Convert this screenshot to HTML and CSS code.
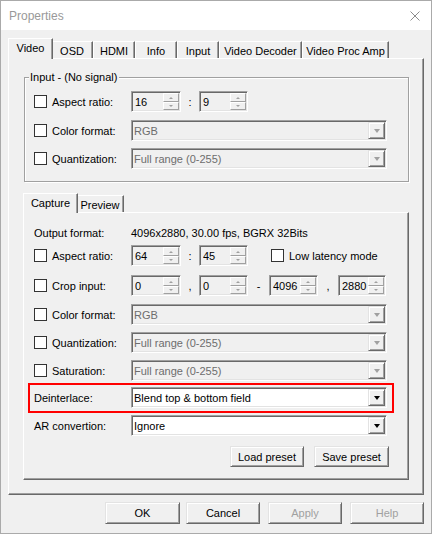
FILE: index.html
```html
<!DOCTYPE html>
<html>
<head>
<meta charset="utf-8">
<title>Properties</title>
<link rel="stylesheet" href="styles.css">
</head>
<body>
<div class="window">
  <div class="titlebar">
    <span class="title">Properties</span>
    <svg class="close" width="10" height="10" viewBox="0 0 10 10"><path d="M0.5 0.5L9.5 9.5M9.5 0.5L0.5 9.5" stroke="#8c8c8c" stroke-width="1" fill="none"/></svg>
  </div>
  <div class="body">
    <div class="tabs outer-tabs">
      <div class="tab sel t-video">Video</div>
      <div class="tab t-osd">OSD</div>
      <div class="tab t-hdmi">HDMI</div>
      <div class="tab t-info">Info</div>
      <div class="tab t-input">Input</div>
      <div class="tab t-dec">Video Decoder</div>
      <div class="tab t-amp">Video Proc Amp</div>
    </div>
    <div class="page outer-page">
      <fieldset class="group">
        <legend>Input - (No signal)</legend>
        <div class="row">
          <span class="lbl"><span class="cb"></span>Aspect ratio:</span>
          <div class="edit w50"><span class="val">16</span><span class="spin"><span class="sb up"></span><span class="sb dn"></span></span></div>
          <span class="sep w18">:</span>
          <div class="edit w49"><span class="val">9</span><span class="spin"><span class="sb up"></span><span class="sb dn"></span></span></div>
        </div>
        <div class="row mt8">
          <span class="lbl"><span class="cb"></span>Color format:</span>
          <div class="combo dis"><span class="val">RGB</span><span class="dd"><span class="arr"></span></span></div>
        </div>
        <div class="row mt7">
          <span class="lbl"><span class="cb"></span>Quantization:</span>
          <div class="combo dis"><span class="val">Full range (0-255)</span><span class="dd"><span class="arr"></span></span></div>
        </div>
      </fieldset>

      <div class="tabs inner-tabs">
        <div class="tab sel t-cap">Capture</div>
        <div class="tab t-prev">Preview</div>
      </div>
      <div class="page inner-page">
        <div class="row">
          <span class="lbl">Output format:</span>
          <span>4096x2880, 30.00 fps, BGRX 32Bits</span>
        </div>
        <div class="row mt2">
          <span class="lbl"><span class="cb"></span>Aspect ratio:</span>
          <div class="edit w50"><span class="val">64</span><span class="spin"><span class="sb up"></span><span class="sb dn"></span></span></div>
          <span class="sep w18">:</span>
          <div class="edit w49"><span class="val">45</span><span class="spin"><span class="sb up"></span><span class="sb dn"></span></span></div>
          <span class="cb cb-low"></span><span>Low latency mode</span>
        </div>
        <div class="row mt9">
          <span class="lbl"><span class="cb"></span>Crop input:</span>
          <div class="edit w50"><span class="val">0</span><span class="spin"><span class="sb up"></span><span class="sb dn"></span></span></div>
          <span class="sep w18">,</span>
          <div class="edit w49"><span class="val">0</span><span class="spin"><span class="sb up"></span><span class="sb dn"></span></span></div>
          <span class="sep w21">-</span>
          <div class="edit w49"><span class="val">4096</span><span class="spin"><span class="sb up"></span><span class="sb dn"></span></span></div>
          <span class="sep w20">,</span>
          <div class="edit w48"><span class="val">2880</span><span class="spin"><span class="sb up"></span><span class="sb dn"></span></span></div>
        </div>
        <div class="row mt8">
          <span class="lbl"><span class="cb"></span>Color format:</span>
          <div class="combo dis"><span class="val">RGB</span><span class="dd"><span class="arr"></span></span></div>
        </div>
        <div class="row mt7">
          <span class="lbl"><span class="cb"></span>Quantization:</span>
          <div class="combo dis"><span class="val">Full range (0-255)</span><span class="dd"><span class="arr"></span></span></div>
        </div>
        <div class="row mt7">
          <span class="lbl"><span class="cb"></span>Saturation:</span>
          <div class="combo dis"><span class="val">Full range (0-255)</span><span class="dd"><span class="arr"></span></span></div>
        </div>
        <div class="highlight">
          <div class="row">
            <span class="lbl">Deinterlace:</span>
            <div class="combo"><span class="val">Blend top &amp; bottom field</span><span class="dd"><span class="arr"></span></span></div>
          </div>
        </div>
        <div class="row mt2">
          <span class="lbl">AR convertion:</span>
          <div class="combo"><span class="val">Ignore</span><span class="dd"><span class="arr"></span></span></div>
        </div>
        <div class="preset-row">
          <button class="btn">Load preset</button>
          <button class="btn btn-save">Save preset</button>
        </div>
      </div>
    </div>
    <div class="buttons">
      <button class="btn dlg btn-ok">OK</button>
      <button class="btn dlg">Cancel</button>
      <button class="btn dlg disabled">Apply</button>
      <button class="btn dlg disabled">Help</button>
    </div>
  </div>
</div>
</body>
</html>
```

FILE: styles.css
```css
* { box-sizing: border-box; }
html, body { margin: 0; padding: 0; }
body {
  font-family: "Liberation Sans", Arial, sans-serif;
  font-size: 11px;
  color: #000;
  background: #fff;
}
.window {
  width: 432px;
  height: 534px;
  border: 1px solid #aaaaaa;
  background: #f0f0f0;
  display: flex;
  flex-direction: column;
}
.titlebar {
  height: 29px;
  flex: none;
  background: #fff;
  display: flex;
  align-items: center;
  justify-content: space-between;
  padding: 0 11px 0 8px;
}
.title { font-size: 12px; color: #999; }
.close { display: block; margin-top: 1px; }

.body {
  flex: 1;
  padding: 8px 7px 0 7px;
  display: flex;
  flex-direction: column;
}

/* tabs */
.tabs { display: flex; align-items: flex-end; flex: none; }
.outer-tabs { height: 20px; padding-left: 2px; }
.inner-tabs { height: 19px; padding-left: 2px; margin-top: 11px; }
.tab {
  height: 17px;
  display: flex;
  align-items: center;
  justify-content: center;
  border-top: 1px solid #fff;
  border-left: 1px solid #fff;
  border-right: 1px solid #696969;
  box-shadow: inset -1px 0 0 #a0a0a0;
  background: #f0f0f0;
  white-space: nowrap;
  padding-top: 1px;
  flex: none;
}
.tab.sel {
  height: 21px;
  margin: 0 -2px -1px;
  position: relative;
  z-index: 1;
  padding-bottom: 3px;
}
.inner-tabs .tab.sel { height: 20px; padding-bottom: 2px; }
.t-video { width: 45px; }
.t-osd { width: 42px; }
.t-hdmi { width: 42px; }
.t-info { width: 42px; }
.t-input { width: 42px; }
.t-dec { width: 83px; }
.t-amp { width: 87px; }
.t-cap { width: 55px; }
.t-prev { width: 48px; }

/* pages */
.page {
  border: 1px solid;
  border-color: #fff #696969 #696969 #fff;
  box-shadow: inset -1px -1px 0 #a0a0a0;
}
.outer-page {
  height: 437px;
  flex: none;
  padding: 12px 14px 0 14px;
  display: flex;
  flex-direction: column;
}
.inner-page {
  height: 268px;
  flex: none;
  padding: 9px 21px 0 10px;
  display: flex;
  flex-direction: column;
}

/* group box */
.group {
  margin: 0 0 0 1px;
  padding: 7px 21px 12px 9px;
  border: 1px solid #a0a0a0;
  box-shadow: inset 1px 1px 0 #fff, 1px 1px 0 #fff;
  min-width: 0;
}
.group legend {
  padding: 0 2px 0 1px;
  margin-left: -5px;
  line-height: 13px;
  background: #f0f0f0;
}

/* rows */
.row {
  display: flex;
  align-items: center;
  height: 21px;
  white-space: nowrap;
}
.mt2 { margin-top: 2px; }
.mt7 { margin-top: 7px; }
.mt8 { margin-top: 8px; }
.mt9 { margin-top: 9px; }
.lbl {
  width: 97px;
  flex: none;
  display: flex;
  align-items: center;
}
.cb {
  width: 13px;
  height: 13px;
  flex: none;
  border: 1px solid #333;
  background: #fff;
  margin-right: 5px;
}
.cb-low { margin-left: 23px; }

.sep { text-align: center; flex: none; }
.w18 { width: 18px; }
.w20 { width: 20px; }
.w21 { width: 21px; }
.w48 { width: 48px; }
.w49 { width: 49px; }
.w50 { width: 50px; }

/* sunken edit / combo */
.edit, .combo {
  height: 21px;
  flex: none;
  display: flex;
  align-items: center;
  border: 1px solid;
  border-color: #a0a0a0 #fff #fff #a0a0a0;
  box-shadow: inset 1px 1px 0 #696969, inset -1px -1px 0 #e3e3e3;
  background: #f0f0f0;
  padding: 1px 1px 1px 3px;
}
.val { flex: 1; overflow: hidden; }
.spin {
  width: 16px;
  height: 17px;
  flex: none;
  display: flex;
  flex-direction: column;
}
.sb {
  flex: none;
  display: flex;
  align-items: center;
  justify-content: center;
  border: 1px solid;
  border-color: #fff #a0a0a0 #a0a0a0 #fff;
  background: #f0f0f0;
}
.sb.up { height: 9px; }
.sb.dn { height: 8px; }
.sb::after {
  content: "";
  width: 0;
  height: 0;
  border-left: 2px solid transparent;
  border-right: 2px solid transparent;
}
.sb.up::after { border-bottom: 2px solid #a0a0a0; }
.sb.dn::after { border-top: 2px solid #a0a0a0; }

.combo {
  flex: 1;
  padding-left: 2px;
  background: #fff;
}
.combo.dis { background: #f0f0f0; color: #6d6d6d; }
.dd {
  width: 17px;
  height: 17px;
  flex: none;
  display: flex;
  align-items: center;
  justify-content: center;
  border: 1px solid;
  border-color: #e3e3e3 #696969 #696969 #e3e3e3;
  box-shadow: inset 1px 1px 0 #fff, inset -1px -1px 0 #a0a0a0;
  background: #f0f0f0;
}
.arr {
  width: 0;
  height: 0;
  border-left: 3.5px solid transparent;
  border-right: 3.5px solid transparent;
  border-top: 4px solid #000;
  margin-top: 1px;
}
.combo.dis .arr { border-top-color: #a0a0a0; }

/* highlight annotation */
.highlight {
  margin: 2px -7px 0 -6px;
  padding: 2px 5px 3px 4px;
  border: 2px solid #ff0000;
}

/* buttons */
.btn {
  font-family: inherit;
  font-size: 11px;
  color: #000;
  height: 21px;
  border: 1px solid;
  border-color: #e3e3e3 #696969 #696969 #e3e3e3;
  box-shadow: inset 1px 1px 0 #fff, inset -1px -1px 0 #a0a0a0;
  background: #f0f0f0;
  padding: 0;
  margin: 0;
  flex: none;
}
.preset-row {
  display: flex;
  justify-content: flex-end;
  gap: 10px;
  margin: 10px -2px 0 0;
}
.preset-row .btn { width: 74px; }
.preset-row .btn-save { width: 75px; }
.buttons {
  display: flex;
  justify-content: flex-end;
  gap: 8px;
  margin-top: 7px;
}
.btn.dlg { width: 74px; height: 22px; }
.btn.btn-ok { width: 75px; margin-right: -2px; }
.btn.disabled { color: #a0a0a0; }
```
